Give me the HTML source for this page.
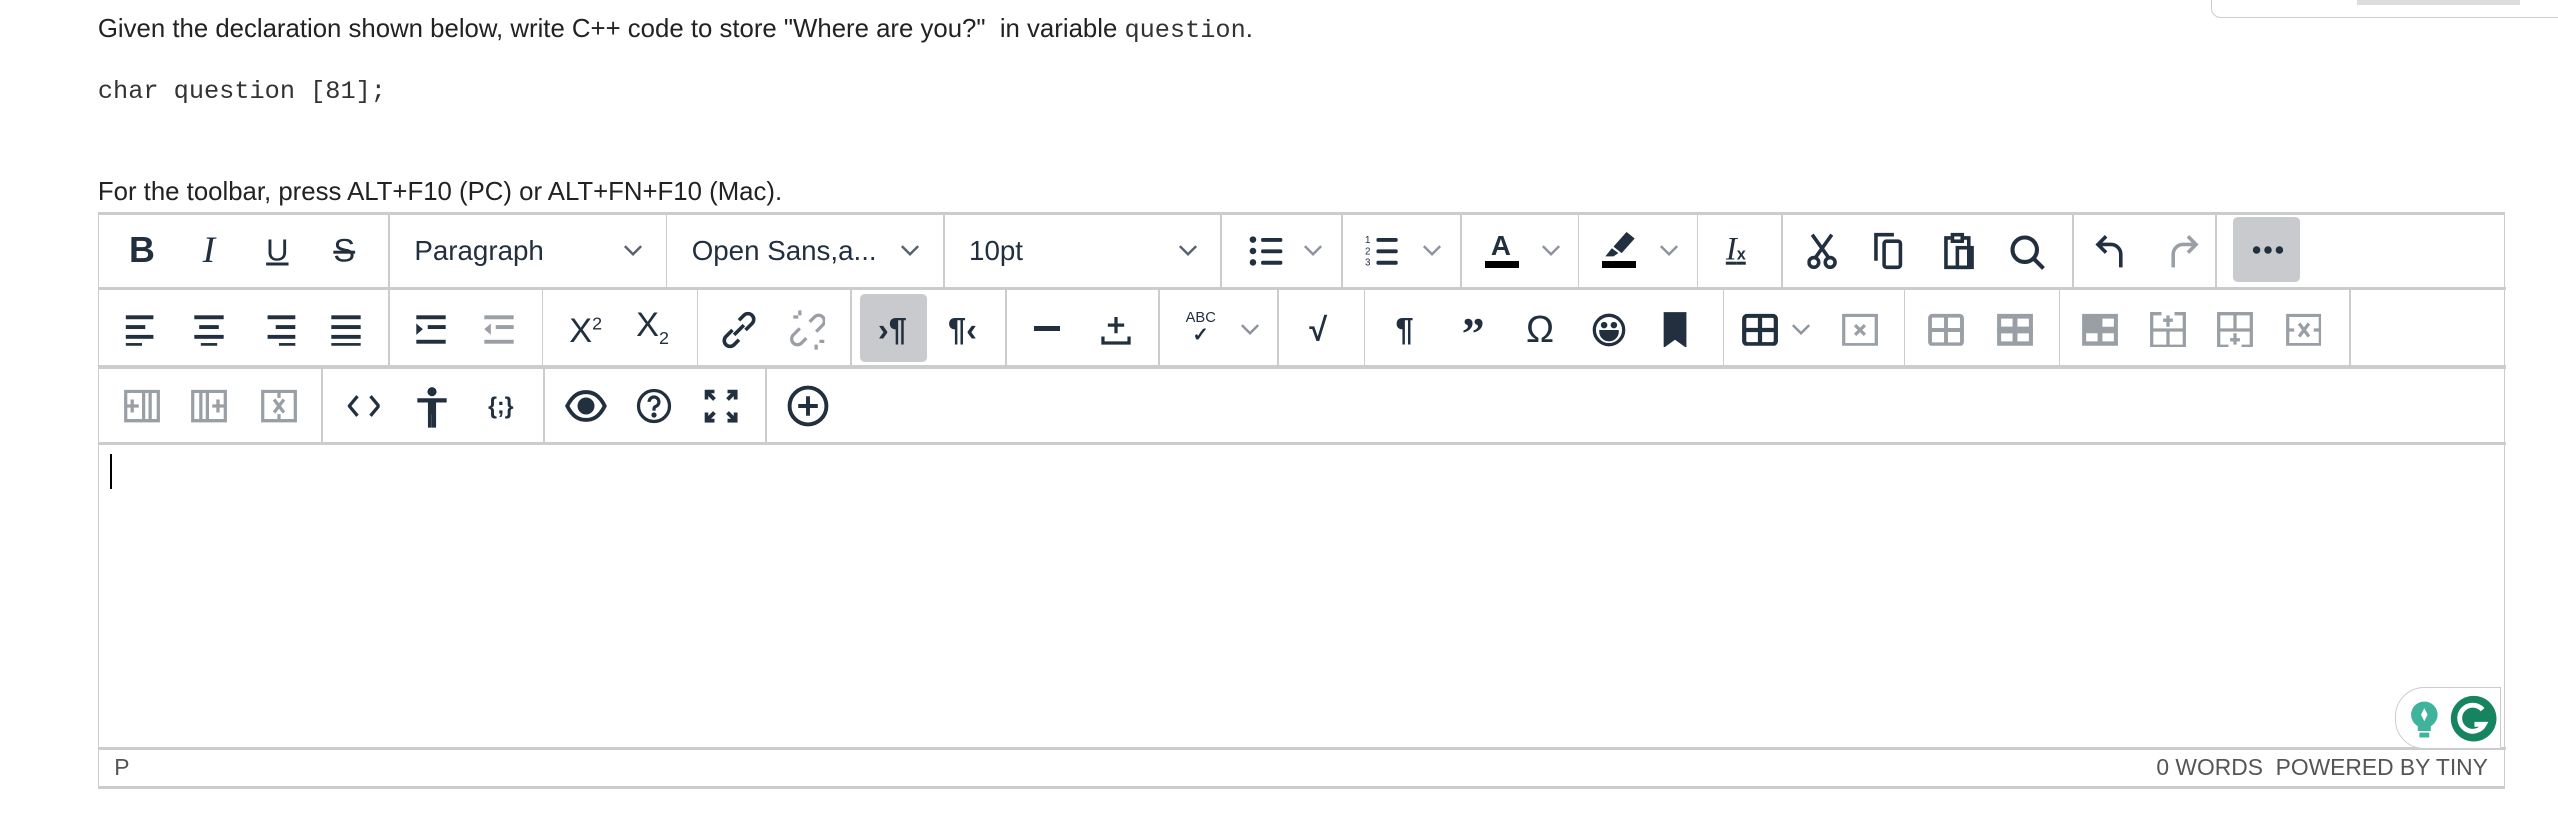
<!DOCTYPE html>
<html><head><meta charset="utf-8"><style>
html,body{margin:0;padding:0;background:#fff;width:2558px;height:823px;overflow:hidden}
#w{zoom:1.6314;width:1568px;height:505px;position:relative;font-family:"Liberation Sans",sans-serif;color:#222}
.t{position:absolute;left:60px;font-size:15.8px;white-space:nowrap}
.m{font-family:"Liberation Mono",monospace;font-size:15.5px;color:#333}
.ed{position:absolute;left:60px;top:130px;width:1474px;height:350px;border:1px solid #ccc;border-width:2px 1px}
.hl{position:absolute;left:60px;width:1476px;height:2px;background:#ccc}
.vl{position:absolute;width:1px;background:#ccc}
.ic{position:absolute;transform:translate(-50%,-50%);color:#222f3e;line-height:1}
.g{color:#9a9fa6}
svg{display:block}
.sel{position:absolute;font-size:17px;color:#222f3e;transform:translateY(-50%)}
</style></head><body><div id="w">
<div class="t" style="top:9px">Given the declaration shown below, write C++ code to store "Where are you?"&nbsp; in variable <span class="m">question</span>.</div>
<div class="t m" style="top:47px">char question [81];</div>
<div class="t" style="top:109px">For the toolbar, press ALT+F10 (PC) or ALT+FN+F10 (Mac).</div>
<div style="position:absolute;left:1355px;top:-4px;width:220px;height:14px;border:1px solid #ccc;border-radius:0 0 0 6px"></div>
<div style="position:absolute;left:1445px;top:0;width:100px;height:3px;background:#ddd"></div>
<div class="ed"></div>
<div class="hl" style="top:176px"></div>
<div class="hl" style="top:224px"></div>
<div class="hl" style="top:271px"></div>
<div class="hl" style="top:458px"></div>
<!-- row1 separators -->
<div class="vl" style="left:238px;top:131px;height:46px"></div>
<div class="vl" style="left:408px;top:131px;height:46px"></div>
<div class="vl" style="left:578px;top:131px;height:46px"></div>
<div class="vl" style="left:748px;top:131px;height:46px"></div>
<div class="vl" style="left:822px;top:131px;height:46px"></div>
<div class="vl" style="left:895px;top:131px;height:46px"></div>
<div class="vl" style="left:967px;top:131px;height:46px"></div>
<div class="vl" style="left:1040px;top:131px;height:46px"></div>
<div class="vl" style="left:1092px;top:131px;height:46px"></div>
<div class="vl" style="left:1270px;top:131px;height:46px"></div>
<div class="vl" style="left:1358px;top:131px;height:46px"></div>
<!-- row2 separators -->
<div class="vl" style="left:238px;top:178px;height:46px"></div>
<div class="vl" style="left:332px;top:178px;height:46px"></div>
<div class="vl" style="left:427px;top:178px;height:46px"></div>
<div class="vl" style="left:521px;top:178px;height:46px"></div>
<div class="vl" style="left:616px;top:178px;height:46px"></div>
<div class="vl" style="left:710px;top:178px;height:46px"></div>
<div class="vl" style="left:783px;top:178px;height:46px"></div>
<div class="vl" style="left:836px;top:178px;height:46px"></div>
<div class="vl" style="left:1056px;top:178px;height:46px"></div>
<div class="vl" style="left:1167px;top:178px;height:46px"></div>
<div class="vl" style="left:1262px;top:178px;height:46px"></div>
<div class="vl" style="left:1440px;top:178px;height:46px"></div>
<!-- row3 separators -->
<div class="vl" style="left:197px;top:226px;height:45px"></div>
<div class="vl" style="left:333px;top:226px;height:45px"></div>
<div class="vl" style="left:469px;top:226px;height:45px"></div>

<!-- row1 -->
<div class="ic" style="left:87px;top:154px;font-size:22px;font-weight:bold">B</div>
<div class="ic" style="left:128px;top:154px;font-size:23px;font-family:'Liberation Serif',serif;font-style:italic">I</div>
<div class="ic" style="left:170px;top:153px;font-size:19px;text-decoration:underline;text-decoration-thickness:2px">U</div>
<div class="ic" style="left:211px;top:154px;font-size:20px;text-decoration:line-through;text-decoration-thickness:2px">S</div>
<div class="sel" style="left:254px;top:154px">Paragraph</div>
<div class="sel" style="left:424px;top:154px">Open Sans,a...</div>
<div class="sel" style="left:594px;top:154px">10pt</div>
<svg class="ic" style="left:388px;top:154px" width="12" height="8"><path d="M1 1l5 5 5-5" stroke="#5a6270" stroke-width="1.5" fill="none"/></svg>
<svg class="ic" style="left:558px;top:154px" width="12" height="8"><path d="M1 1l5 5 5-5" stroke="#5a6270" stroke-width="1.5" fill="none"/></svg>
<svg class="ic" style="left:728px;top:154px" width="12" height="8"><path d="M1 1l5 5 5-5" stroke="#5a6270" stroke-width="1.5" fill="none"/></svg>
<svg class="ic" style="left:776px;top:154px" width="22" height="22" viewBox="0 0 22 22" fill="#222f3e"><circle cx="3" cy="4" r="2"/><circle cx="3" cy="11" r="2"/><circle cx="3" cy="18" r="2"/><rect x="8" y="3" width="13" height="2.4" rx="1"/><rect x="8" y="10" width="13" height="2.4" rx="1"/><rect x="8" y="17" width="13" height="2.4" rx="1"/></svg>
<svg class="ic" style="left:805px;top:154px" width="12" height="8"><path d="M1 1l5 5 5-5" stroke="#8d949e" stroke-width="1.5" fill="none"/></svg>
<svg class="ic" style="left:848px;top:154px" width="22" height="22" viewBox="0 0 22 22" fill="#222f3e"><text x="0" y="6" font-size="6" font-family="Liberation Sans">1</text><text x="0" y="13" font-size="6" font-family="Liberation Sans">2</text><text x="0" y="20" font-size="6" font-family="Liberation Sans">3</text><rect x="7" y="3" width="13" height="2.4" rx="1"/><rect x="7" y="10" width="13" height="2.4" rx="1"/><rect x="7" y="17" width="13" height="2.4" rx="1"/></svg>
<svg class="ic" style="left:878px;top:154px" width="12" height="8"><path d="M1 1l5 5 5-5" stroke="#8d949e" stroke-width="1.5" fill="none"/></svg>
<div class="ic" style="left:920px;top:151px;font-size:17px;font-weight:bold">A</div>
<div style="position:absolute;left:910px;top:160px;width:21px;height:4px;background:#000"></div>
<svg class="ic" style="left:951px;top:154px" width="12" height="8"><path d="M1 1l5 5 5-5" stroke="#8d949e" stroke-width="1.5" fill="none"/></svg>
<svg class="ic" style="left:993px;top:150px" width="20" height="16" viewBox="0 0 20 16" fill="#222f3e"><path d="M14 0l5 4-8 9-5-4z"/><path d="M5 10l4 3-3 2H1z"/></svg>
<div style="position:absolute;left:982px;top:160px;width:21px;height:4px;background:#000"></div>
<svg class="ic" style="left:1023px;top:154px" width="12" height="8"><path d="M1 1l5 5 5-5" stroke="#8d949e" stroke-width="1.5" fill="none"/></svg>
<div class="ic" style="left:1064px;top:153px;font-size:20px;font-family:'Liberation Serif',serif;font-style:italic;text-decoration:underline">I<span style="font-size:10px;font-style:normal;font-weight:bold;font-family:'Liberation Sans'">x</span></div>
<svg class="ic" style="left:1117px;top:154px" width="18" height="22" viewBox="0 0 18 22" fill="none" stroke="#222f3e" stroke-width="2.2"><path d="M3 1l10 14M15 1L5 15"/><circle cx="4" cy="18" r="3"/><circle cx="14" cy="18" r="3"/></svg>
<svg class="ic" style="left:1158px;top:154px" width="20" height="24" viewBox="0 0 20 24" fill="none" stroke="#222f3e" stroke-width="2.2"><path d="M2 18V2h11"/><rect x="7" y="6" width="10" height="16" rx="1.5"/></svg>
<svg class="ic" style="left:1201px;top:154px" width="20" height="24" viewBox="0 0 20 24" fill="none" stroke="#222f3e" stroke-width="2.2"><path d="M5 4H2v18h14V4h-3"/><rect x="6" y="2" width="6" height="4"/><rect x="9" y="10" width="9" height="12"/></svg>
<svg class="ic" style="left:1243px;top:155px" width="24" height="24" viewBox="0 0 24 24" fill="none" stroke="#222f3e" stroke-width="2.5"><circle cx="10" cy="10" r="7.5"/><path d="M15.5 15.5l6 6"/></svg>
<svg class="ic" style="left:1294px;top:154px" width="20" height="22" viewBox="0 0 20 22" fill="none" stroke="#222f3e" stroke-width="2.2"><path d="M7 2L2 7l5 5M2 7h8a6 6 0 0 1 6 6v8"/></svg>
<svg class="ic" style="left:1338px;top:154px" width="20" height="22" viewBox="0 0 20 22" fill="none" stroke="#9a9fa6" stroke-width="2.2"><path d="M13 2l5 5-5 5M18 7h-8a6 6 0 0 0-6 6v8"/></svg>
<div style="position:absolute;left:1369px;top:133px;width:41px;height:40px;background:#c8cacd;border-radius:3px"></div>
<svg class="ic" style="left:1390px;top:153px" width="20" height="6" viewBox="0 0 20 6" fill="#222f3e"><circle cx="3" cy="3" r="2.3"/><circle cx="10" cy="3" r="2.3"/><circle cx="17" cy="3" r="2.3"/></svg>

<!-- row2 -->
<svg class="ic" style="left:87px;top:202px" width="20" height="20" viewBox="0 0 20 20" fill="#222f3e"><rect x="0" y="1" width="17" height="2.4"/><rect x="0" y="7" width="12" height="2.4"/><rect x="0" y="13" width="17" height="2.4"/><rect x="0" y="18" width="10" height="2"/></svg>
<svg class="ic" style="left:128px;top:202px" width="20" height="20" viewBox="0 0 20 20" fill="#222f3e"><rect x="1" y="1" width="18" height="2.4"/><rect x="4" y="7" width="12" height="2.4"/><rect x="1" y="13" width="18" height="2.4"/><rect x="5" y="18" width="10" height="2"/></svg>
<svg class="ic" style="left:171px;top:202px" width="20" height="20" viewBox="0 0 20 20" fill="#222f3e"><rect x="3" y="1" width="17" height="2.4"/><rect x="8" y="7" width="12" height="2.4"/><rect x="3" y="13" width="17" height="2.4"/><rect x="10" y="18" width="10" height="2"/></svg>
<svg class="ic" style="left:212px;top:202px" width="20" height="20" viewBox="0 0 20 20" fill="#222f3e"><rect x="1" y="1" width="18" height="2.4"/><rect x="1" y="7" width="18" height="2.4"/><rect x="1" y="13" width="18" height="2.4"/><rect x="1" y="18" width="18" height="2"/></svg>
<svg class="ic" style="left:264px;top:202px" width="20" height="20" viewBox="0 0 20 20" fill="#222f3e"><rect x="1" y="1" width="18" height="2.4"/><path d="M1 6l4 3.5-4 3.5z"/><rect x="8" y="7" width="11" height="2.4"/><rect x="1" y="16" width="18" height="2.4"/></svg>
<svg class="ic" style="left:306px;top:202px" width="20" height="20" viewBox="0 0 20 20" fill="#9a9fa6"><rect x="1" y="1" width="18" height="2.4"/><path d="M5 6l-4 3.5 4 3.5z"/><rect x="8" y="7" width="11" height="2.4"/><rect x="1" y="16" width="18" height="2.4"/></svg>
<div class="ic" style="left:359px;top:203px;font-size:21px">X<sup style="font-size:11px">2</sup></div>
<div class="ic" style="left:400px;top:201px;font-size:21px">X<sub style="font-size:11px">2</sub></div>
<svg class="ic" style="left:453px;top:202px" width="22" height="24" viewBox="0 0 22 24" fill="none" stroke="#222f3e" stroke-width="2.2"><path d="M11 6l3-3a3.5 3.5 0 0 1 5 5l-4 4M11 18l-3 3a3.5 3.5 0 0 1-5-5l4-4M8 15l6-6"/></svg>
<svg class="ic" style="left:495px;top:202px" width="22" height="26" viewBox="0 0 22 26" fill="none" stroke="#9a9fa6" stroke-width="2"><path d="M12 8l3-3a3.5 3.5 0 0 1 5 5l-4 4M10 18l-3 3a3.5 3.5 0 0 1-5-5l4-4M6 1v3M2 5h3M16 22v3M18 20h3"/></svg>
<div style="position:absolute;left:527px;top:180px;width:41px;height:42px;background:#c8cacd;border-radius:3px"></div>
<div class="ic" style="left:547px;top:202px;font-size:20px;font-weight:bold">›¶</div>
<div class="ic" style="left:590px;top:202px;font-size:20px;font-weight:bold">¶‹</div>
<div style="position:absolute;left:634px;top:200px;width:16px;height:3px;background:#222f3e"></div>
<svg class="ic" style="left:684px;top:202px" width="20" height="20" viewBox="0 0 20 20" fill="none" stroke="#222f3e" stroke-width="2"><path d="M10 2v10M5 7h10M2 14v4h16v-4"/></svg>
<div class="ic" style="left:736px;top:201px;font-size:9px;text-align:center">ABC<br><span style="font-size:12px;font-weight:bold">✓</span></div>
<svg class="ic" style="left:766px;top:202px" width="12" height="8"><path d="M1 1l5 5 5-5" stroke="#8d949e" stroke-width="1.5" fill="none"/></svg>
<div class="ic" style="left:808px;top:202px;font-size:20px;font-weight:bold">√</div>
<div class="ic" style="left:861px;top:202px;font-size:20px;font-weight:bold">¶</div>
<div class="ic" style="left:903px;top:205px;font-size:28px;font-weight:bold;font-family:'Liberation Serif',serif">”</div>
<div class="ic" style="left:944px;top:202px;font-size:23px">Ω</div>
<svg class="ic" style="left:986px;top:202px" width="22" height="22" viewBox="0 0 22 22" fill="none" stroke="#222f3e" stroke-width="2"><circle cx="11" cy="11" r="9"/><circle cx="8" cy="8" r="1" fill="#222f3e"/><circle cx="14" cy="8" r="1" fill="#222f3e"/><path d="M6 12h10a5 5 0 0 1-10 0z" fill="#222f3e"/></svg>
<svg class="ic" style="left:1027px;top:202px" width="14" height="22" viewBox="0 0 14 22" fill="#222f3e"><path d="M0 0h14v22l-7-5-7 5z"/></svg>
<svg class="ic" style="left:1079px;top:202px" width="22" height="20" viewBox="0 0 22 20" fill="none" stroke="#222f3e" stroke-width="2.6"><rect x="1.3" y="1.3" width="19.4" height="17.4" rx="2"/><path d="M11 1v18M1 10h20"/></svg>
<svg class="ic" style="left:1104px;top:202px" width="12" height="8"><path d="M1 1l5 5 5-5" stroke="#8d949e" stroke-width="1.5" fill="none"/></svg>
<svg class="ic" style="left:1140px;top:202px" width="22" height="20" viewBox="0 0 22 20" fill="none" stroke="#9a9fa6" stroke-width="2"><rect x="1" y="1" width="20" height="18"/><path d="M8 7l6 6M14 7l-6 6"/></svg>
<svg class="ic" style="left:1193px;top:202px" width="22" height="20" viewBox="0 0 22 20" fill="none" stroke="#9a9fa6" stroke-width="2.4"><rect x="1.2" y="1.2" width="19.6" height="17.6" rx="1.5"/><path d="M11 1v18M1 10h20"/></svg>
<svg class="ic" style="left:1235px;top:202px" width="22" height="20" viewBox="0 0 22 20" fill="#9a9fa6"><path d="M0 0h22v20H0zM2.5 3v5h7V3zm10 0v5h7V3zM2.5 12v5h7v-5zm10 0v5h7v-5z" fill-rule="evenodd"/><rect x="0" y="8" width="22" height="4"/></svg>
<svg class="ic" style="left:1287px;top:202px" width="22" height="20" viewBox="0 0 22 20" fill="#9a9fa6"><path d="M0 0h22v20H0zM12.5 3v5h7V3zM2.5 12v5h7v-5zm10 0v5h7v-5z" fill-rule="evenodd"/></svg>
<svg class="ic" style="left:1329px;top:202px" width="22" height="22" viewBox="0 0 22 22" fill="none" stroke="#9a9fa6" stroke-width="2"><path d="M7 1H1v20h20V1h-6M1 11h20M11 11v10M11 2v7M8 5h6"/></svg>
<svg class="ic" style="left:1370px;top:202px" width="22" height="22" viewBox="0 0 22 22" fill="none" stroke="#9a9fa6" stroke-width="2"><path d="M7 21H1V1h20v20h-6M1 11h20M11 1v10M11 13v7M8 17h6"/></svg>
<svg class="ic" style="left:1412px;top:202px" width="22" height="20" viewBox="0 0 22 20" fill="none" stroke="#9a9fa6" stroke-width="2"><path d="M1 1h20v18H1zM8 6l6 8M14 6l-6 8M1 10h4M17 10h4"/></svg>

<!-- row3 -->
<svg class="ic" style="left:87px;top:249px" width="22" height="20" viewBox="0 0 22 20" fill="none" stroke="#9a9fa6" stroke-width="2"><path d="M1 1h20v18H1zM12 1v18M1 10h8M5 6v8M16 1v18"/></svg>
<svg class="ic" style="left:128px;top:249px" width="22" height="20" viewBox="0 0 22 20" fill="none" stroke="#9a9fa6" stroke-width="2"><path d="M1 1h20v18H1zM6 1v18M10 1v18M13 10h7M16.5 6v8"/></svg>
<svg class="ic" style="left:171px;top:249px" width="22" height="20" viewBox="0 0 22 20" fill="none" stroke="#9a9fa6" stroke-width="2"><path d="M1 1h20v18H1zM8 6l6 8M14 6l-6 8M11 1v4M11 15v4"/></svg>
<svg class="ic" style="left:223px;top:249px" width="20" height="14" viewBox="0 0 20 14" fill="none" stroke="#222f3e" stroke-width="2"><path d="M6 1L1 7l5 6M14 1l5 6-5 6"/></svg>
<svg class="ic" style="left:265px;top:250px" width="20" height="26" viewBox="0 0 20 26" fill="#222f3e"><circle cx="10" cy="3" r="2.8"/><path d="M1 7h18v2.6h-6.5V25H10v-8h-0.1v8H7.5V9.6H1z"/></svg>
<div class="ic" style="left:307px;top:249px;font-size:14px;font-weight:bold">{;}</div>
<svg class="ic" style="left:359px;top:249px" width="26" height="20" viewBox="0 0 26 20" fill="none" stroke="#222f3e" stroke-width="2.4"><path d="M1.5 10C5 3 9 1.5 13 1.5S21 3 24.5 10C21 17 17 18.5 13 18.5S5 17 1.5 10z"/><circle cx="13" cy="10" r="4" fill="#222f3e"/></svg>
<svg class="ic" style="left:401px;top:249px" width="22" height="22" viewBox="0 0 22 22" fill="none" stroke="#222f3e" stroke-width="2"><circle cx="11" cy="11" r="9.5"/><path d="M8 8.5a3 3 0 1 1 4 2.8c-1 .5-1 1-1 2.5"/><circle cx="11" cy="16.5" r=".6" fill="#222f3e"/></svg>
<svg class="ic" style="left:442px;top:249px" width="20" height="20" viewBox="0 0 20 20" fill="none" stroke="#222f3e" stroke-width="2.4"><path d="M1 6V1h5M14 1h5v5M19 14v5h-5M6 19H1v-5M1 1l5 5M19 1l-5 5M19 19l-5-5M1 19l5-5"/></svg>
<svg class="ic" style="left:495px;top:249px" width="26" height="26" viewBox="0 0 26 26" fill="none" stroke="#222f3e" stroke-width="2.4"><circle cx="13" cy="13" r="11.3"/><path d="M13 7v12M7 13h12"/></svg>

<!-- body -->
<div style="position:absolute;left:67.5px;top:278px;width:1px;height:22px;background:#000"></div>
<div style="position:absolute;left:1468px;top:421px;width:64px;height:37px;border:1px solid #ccc;border-radius:18px 0 0 18px;background:#fff"></div>
<svg style="position:absolute;left:1476px;top:429px" width="20" height="24" viewBox="0 0 20 24"><path d="M10 1a8 8 0 0 0-4 15v3h8v-3a8 8 0 0 0-4-15z" fill="#3fb39c"/><path d="M10 5l2 4-2 4-2-4z" fill="#fff"/><rect x="7" y="20" width="6" height="3" fill="#3fb39c"/></svg>
<svg style="position:absolute;left:1502px;top:426px" width="29" height="29" viewBox="0 0 29 29"><circle cx="14.5" cy="14.5" r="14" fill="#15845f"/><path d="M20 9a8 8 0 1 0 1 9h-6" fill="none" stroke="#fff" stroke-width="3"/></svg>
<!-- status -->
<div style="position:absolute;left:70px;top:462px;font-size:14px;color:#555">P</div>
<div style="position:absolute;right:43px;top:462px;font-size:14px;color:#555;white-space:nowrap">0 WORDS&nbsp; POWERED BY TINY</div>
</div></body></html>
